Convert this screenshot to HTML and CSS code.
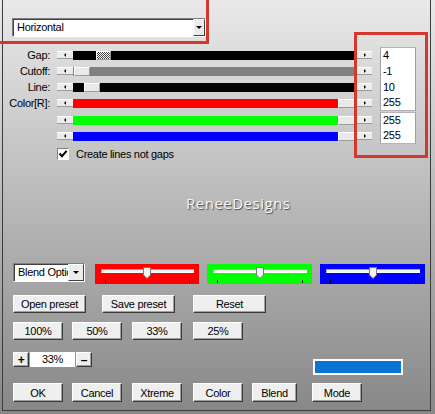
FILE: index.html
```html
<!DOCTYPE html>
<html>
<head>
<meta charset="utf-8">
<link rel="stylesheet" href="styles.css">
</head>
<body>
<div class="dialog">
  <div class="combo combo-main">
    <span class="combo-text">Horizontal</span>
    <span class="combo-btn"><i class="down"></i></span>
  </div>

  <div class="sliders">
    <div class="srow">
      <span class="slabel">Gap:</span>
      <span class="sbtn left"></span>
      <div class="track black"><span class="thumb dither pos-gap"></span></div>
      <span class="sbtn right"></span>
      <span class="val top">4</span>
    </div>
    <div class="srow">
      <span class="slabel">Cutoff:</span>
      <span class="sbtn left"></span>
      <div class="track grey"><span class="thumb pos-cut"></span></div>
      <span class="sbtn right"></span>
      <span class="val">-1</span>
    </div>
    <div class="srow">
      <span class="slabel">Line:</span>
      <span class="sbtn left"></span>
      <div class="track black"><span class="thumb pos-line"></span></div>
      <span class="sbtn right"></span>
      <span class="val">10</span>
    </div>
    <div class="srow">
      <span class="slabel">Color[R]:</span>
      <span class="sbtn left"></span>
      <div class="track"><span class="fill red"></span><span class="thumb end"></span></div>
      <span class="sbtn right"></span>
      <span class="val bottom">255</span>
    </div>
    <div class="srow sep">
      <span class="slabel"></span>
      <span class="sbtn left"></span>
      <div class="track"><span class="fill green"></span><span class="thumb end"></span></div>
      <span class="sbtn right"></span>
      <span class="val top">255</span>
    </div>
    <div class="srow">
      <span class="slabel"></span>
      <span class="sbtn left"></span>
      <div class="track"><span class="fill blue"></span><span class="thumb end"></span></div>
      <span class="sbtn right"></span>
      <span class="val bottom">255</span>
    </div>
  </div>

  <div class="cbrow">
    <span class="check"><svg width="10" height="10" viewBox="0 0 10 10"><polyline points="1.5,4.5 4,7.2 8.6,1.8" fill="none" stroke="#000" stroke-width="2"/></svg></span>
    <span class="cblabel">Create lines not gaps</span>
  </div>

  <div class="watermark">ReneeDesigns</div>

  <div class="brow">
    <div class="combo combo-blend">
      <span class="combo-text">Blend Options</span>
      <span class="combo-btn wide"><i class="down"></i></span>
    </div>
    <div class="panel p-red">
      <div class="groove"></div>
      <svg class="knob" width="8" height="12" viewBox="0 0 8 12"><polygon points="0.5,0.5 7.5,0.5 7.5,8 4,11.5 0.5,8" fill="#f2f2f2" stroke="#7a7a7a"/></svg>
      <span class="tick t1"></span><span class="tick t2"></span>
    </div>
    <div class="panel p-green">
      <div class="groove"></div>
      <svg class="knob" width="8" height="12" viewBox="0 0 8 12"><polygon points="0.5,0.5 7.5,0.5 7.5,8 4,11.5 0.5,8" fill="#f2f2f2" stroke="#7a7a7a"/></svg>
      <span class="tick t1"></span><span class="tick t2"></span>
    </div>
    <div class="panel p-blue">
      <div class="groove"></div>
      <svg class="knob" width="8" height="12" viewBox="0 0 8 12"><polygon points="0.5,0.5 7.5,0.5 7.5,8 4,11.5 0.5,8" fill="#f2f2f2" stroke="#7a7a7a"/></svg>
      <span class="tick t1"></span><span class="tick t2"></span>
    </div>
  </div>

  <div class="row row-presets">
    <span class="btn w73">Open preset</span>
    <span class="btn w73">Save preset</span>
    <span class="btn w73">Reset</span>
  </div>

  <div class="row row-zoom">
    <span class="btn w50">100%</span>
    <span class="btn w50">50%</span>
    <span class="btn w50">33%</span>
    <span class="btn w50">25%</span>
  </div>

  <div class="row row-step">
    <span class="btn small plus">+</span>
    <span class="field">33%</span>
    <span class="btn small minus">&#8211;</span>
    <span class="swatch"></span>
  </div>

  <div class="row row-actions">
    <span class="btn w50">OK</span>
    <span class="btn w50">Cancel</span>
    <span class="btn w50">Xtreme</span>
    <span class="btn w50">Color</span>
    <span class="btn w45">Blend</span>
    <span class="btn w50">Mode</span>
  </div>
</div>

<div class="mark mark-top"></div>
<div class="mark mark-values"></div>
</body>
</html>
```

FILE: styles.css
```css
* { box-sizing: border-box; }
html, body { margin: 0; padding: 0; }

body {
  width: 435px;
  height: 414px;
  overflow: hidden;
  position: relative;
  background: linear-gradient(#e9e9e9, #878787);
  font-family: "Liberation Sans", Arial, sans-serif;
  font-size: 11px;
  letter-spacing: -0.3px;
  color: #000;
}

.dialog {
  margin-left: 2px;
  width: 429px;
  height: 411px;
  border-left: 1px solid #3c3c3c;
  border-right: 1px solid #3c3c3c;
  border-bottom: 1px solid #3c3c3c;
  padding-top: 18px;
}

/* combo boxes */
.combo {
  display: flex;
  background: #fff;
  border: 1px solid;
  border-color: #808080 #ffffff #ffffff #808080;
  box-shadow: inset 1px 1px #404040;
  overflow: hidden;
}
.combo-main {
  margin-left: 9px;
  width: 194px;
  height: 19px;
}
.combo-text {
  flex: 1;
  padding-left: 4px;
  line-height: 17px;
  white-space: nowrap;
  overflow: hidden;
}
.combo-btn {
  width: 12px;
  background: #ececec;
  border: 1px solid;
  border-color: #ffffff #404040 #404040 #ffffff;
  display: flex;
  align-items: center;
  justify-content: center;
}
.combo-btn.wide { width: 16px; }
.down {
  width: 0;
  height: 0;
  border-left: 3px solid transparent;
  border-right: 3px solid transparent;
  border-top: 3px solid #000;
}

/* slider rows */
.sliders { margin-top: 10px; }
.srow {
  display: flex;
  align-items: center;
  height: 16px;
}
.srow.sep { margin-top: 1px; }
.slabel {
  width: 47px;
  text-align: right;
  white-space: nowrap;
}
.sbtn {
  width: 16px;
  height: 8px;
  background: #ececec;
  border-top: 1px solid #ffffff;
  border-bottom: 1px solid #9a9a9a;
  display: flex;
  align-items: center;
  justify-content: center;
}
.sbtn.left { margin-left: 7px; }
.sbtn.right { margin-left: 2px; width: 15px; }
.sbtn.left::after {
  content: "";
  border-top: 2px solid transparent;
  border-bottom: 2px solid transparent;
  border-right: 2px solid #000;
}
.sbtn.right::after {
  content: "";
  border-top: 2px solid transparent;
  border-bottom: 2px solid transparent;
  border-left: 2px solid #000;
}
.track {
  width: 282px;
  height: 9px;
  display: flex;
}
.track.black { background: #000; }
.track.grey { background: #808080; }
.fill { flex: 1; }
.fill.red { background: #ff0000; }
.fill.green { background: #00ff00; }
.fill.blue { background: #0000ff; }
.thumb {
  width: 16px;
  height: 9px;
  background: #e9e9e9;
  border: 1px solid;
  border-color: #ffffff #9a9a9a #9a9a9a #ffffff;
}
.thumb.dither {
  width: 15px;
  background-color: #fff;
  background-image: repeating-conic-gradient(#404040 0 25%, #ffffff 0 50%);
  background-size: 2px 2px;
}
.thumb.end { width: 17px; }
.pos-gap { margin-left: 23px; }
.pos-cut { margin-left: 1px; }
.pos-line { margin-left: 11px; }

.val {
  margin-left: 8px;
  width: 36px;
  height: 16px;
  background: #fff;
  border-left: 1px solid #a0a0a0;
  border-right: 1px solid #a0a0a0;
  padding-left: 2px;
  line-height: 16px;
}
.val.top { border-top: 1px solid #b4b4b4; line-height: 15px; }
.val.bottom { border-bottom: 1px solid #b4b4b4; line-height: 15px; }

/* checkbox */
.cbrow {
  display: flex;
  align-items: center;
  height: 12px;
  margin-top: 4px;
}
.check {
  margin-left: 54px;
  width: 12px;
  height: 12px;
  background: #fff;
  border: 1px solid;
  border-color: #808080 #ffffff #ffffff #808080;
  display: flex;
  align-items: center;
  justify-content: center;
}
.cblabel { margin-left: 7px; white-space: nowrap; }

/* watermark */
.watermark {
  margin-top: 33px;
  margin-left: 183px;
  height: 20px;
  line-height: 20px;
  font-family: "Open Sans", "Liberation Sans", sans-serif;
  font-size: 15px;
  letter-spacing: 0.5px;
  color: #f6f6f6;
  text-shadow: 1px 1px 1px rgba(40, 40, 40, 0.75);
}

/* blend row */
.brow {
  display: flex;
  align-items: flex-start;
  margin-top: 50px;
  margin-left: 10px;
  height: 21px;
}
.combo-blend {
  width: 72px;
  height: 19px;
}
.panel {
  position: relative;
  height: 20px;
  margin-top: 1px;
}
.p-red { background: #ff0000; margin-left: 10px; width: 104px; }
.p-green { background: #00ff00; margin-left: 8px; width: 105px; }
.p-blue { background: #0000ff; margin-left: 8px; width: 105px; }
.groove {
  margin: 5px 5px 0 6px;
  height: 4px;
  background: #f4f4f4;
  border-top: 1px solid #a8a8a8;
  border-left: 1px solid #a8a8a8;
  border-bottom: 1px solid #ffffff;
}
.knob {
  position: absolute;
  top: 3px;
  left: 48px;
}
.p-green .knob, .p-blue .knob { left: 49px; }
.tick {
  position: absolute;
  top: 16px;
  width: 1px;
  height: 3px;
  background: #000;
}
.tick.t1 { left: 10px; }
.tick.t2 { right: 9px; }

/* buttons */
.row { display: flex; align-items: flex-start; }
.btn {
  display: flex;
  align-items: center;
  justify-content: center;
  background: #efefef;
  border: 1px solid;
  border-color: #ffffff #3a3a3a #3a3a3a #ffffff;
  box-shadow: inset -1px -1px #a0a0a0;
  white-space: nowrap;
}
.w73 { width: 73px; height: 18px; }
.w50 { width: 50px; }
.w45 { width: 45px; }

.row-presets { margin-top: 11px; }
.row-presets .btn:nth-child(1) { margin-left: 10px; }
.row-presets .btn:nth-child(2) { margin-left: 16px; }
.row-presets .btn:nth-child(3) { margin-left: 18px; }

.row-zoom { margin-top: 9px; }
.row-zoom .btn { height: 18px; }
.row-zoom .btn:nth-child(1) { margin-left: 10px; }
.row-zoom .btn:nth-child(2) { margin-left: 9px; }
.row-zoom .btn:nth-child(3) { margin-left: 10px; }
.row-zoom .btn:nth-child(4) { margin-left: 11px; }

.row-step { margin-top: 12px; height: 23px; }
.btn.small { width: 16px; height: 15px; font-weight: bold; font-size: 12px; }
.plus { margin-left: 10px; }
.minus { margin-left: 1px; width: 15px; }
.field {
  margin-left: 1px;
  width: 45px;
  height: 15px;
  background: #fff;
  text-align: center;
  line-height: 15px;
}
.swatch {
  margin-left: 221px;
  margin-top: 7px;
  width: 90px;
  height: 16px;
  background: #0a74d6;
  border: 2px solid #ffffff;
}

.row-actions { margin-top: 8px; }
.row-actions .btn { height: 19px; }
.row-actions .btn:nth-child(1) { margin-left: 10px; }
.row-actions .btn:nth-child(2) { margin-left: 9px; }
.row-actions .btn:nth-child(3) { margin-left: 10px; }
.row-actions .btn:nth-child(4) { margin-left: 11px; }
.row-actions .btn:nth-child(5) { margin-left: 9px; }
.row-actions .btn:nth-child(6) { margin-left: 15px; }

/* red annotation frames */
.mark {
  position: absolute;
  border: 3px solid #d4382d;
}
.mark-top {
  left: -10px;
  top: -10px;
  width: 219px;
  height: 54px;
}
.mark-values {
  left: 354px;
  top: 32px;
  width: 74px;
  height: 126px;
}
```
